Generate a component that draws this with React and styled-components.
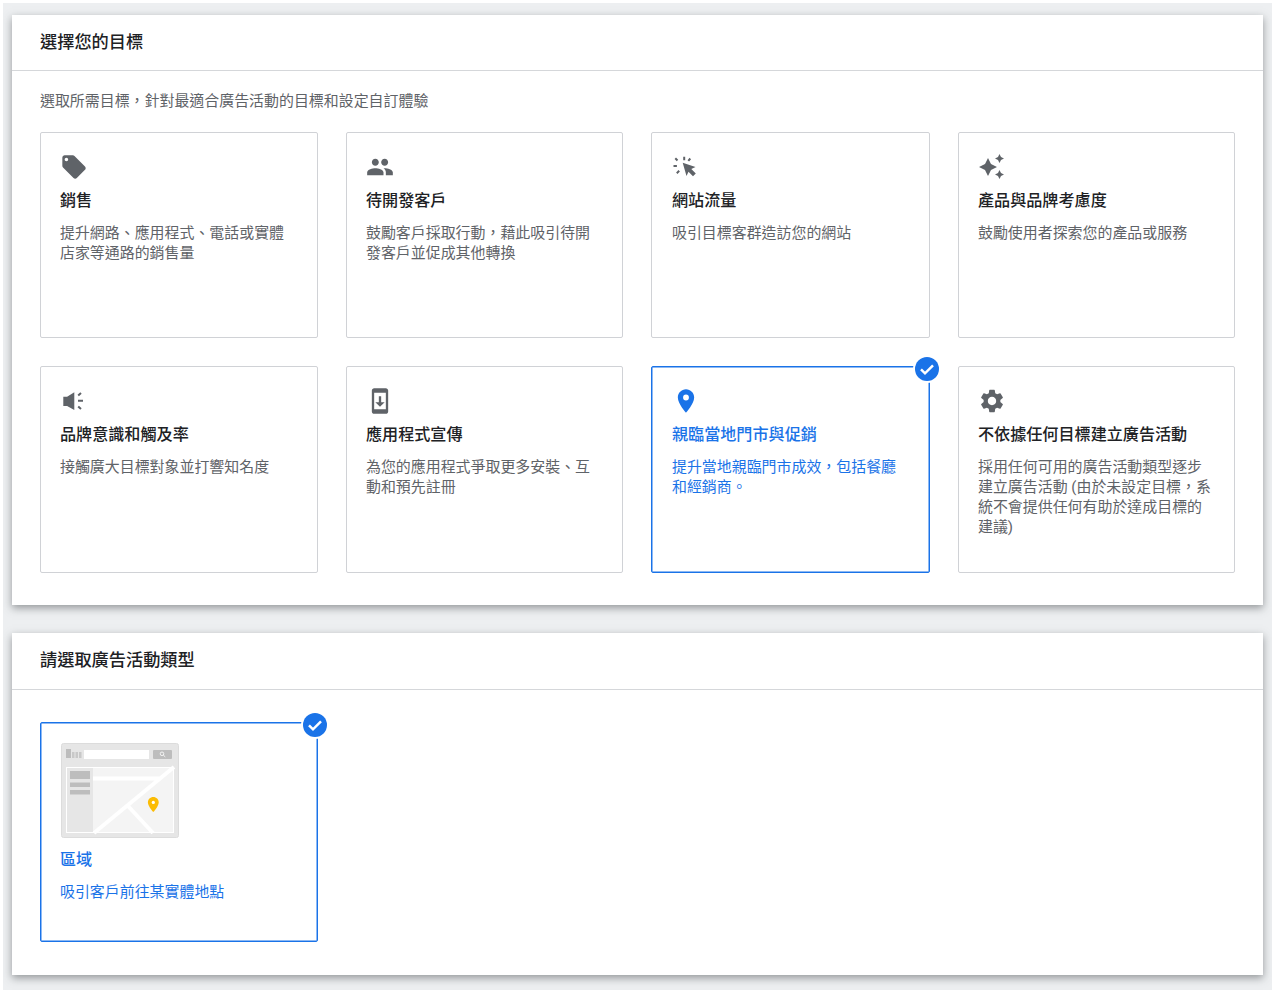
import styled, { createGlobalStyle } from 'styled-components';
import { MdLocalOffer, MdPeople, MdSystemUpdate, MdPlace, MdSettings } from 'react-icons/md';

const GlobalStyle = createGlobalStyle`
  html, body {
    margin: 0;
    padding: 0;
    background: #fff;
  }
  * {
    box-sizing: border-box;
  }
`;

const Page = styled.div`
  font-family: Roboto, 'Noto Sans CJK TC', sans-serif;
  margin: 3px 0 0 3px;
  padding: 12px 9px 0;
  height: 987px;
  overflow: hidden;
  background: #edeff1;
  display: flex;
  flex-direction: column;
  gap: 28px;
`;

const Panel = styled.section`
  background: #fff;
  box-shadow: 0 3px 8px rgba(60, 64, 67, 0.5);
`;

const PanelHeader = styled.h2`
  margin: 0;
  height: ${(p) => p.$height || 56}px;
  padding: 0 28px 4px;
  display: flex;
  align-items: center;
  font-size: 17.2px;
  font-weight: 500;
  color: #202124;
  border-bottom: 1px solid #d5d7da;
`;

const PanelBody = styled.div`
  padding: ${(p) => p.$top || 20}px 28px ${(p) => p.$bottom || 32}px;
`;

const Hint = styled.p`
  margin: 0 0 21px;
  font-size: 14.95px;
  line-height: 20px;
  color: #5f6368;
`;

const CardGrid = styled.div`
  display: grid;
  grid-template-columns: 278px 277px 279px 277px;
  grid-template-rows: ${(p) => p.$rows};
  gap: 28px;
`;

const Card = styled.div`
  position: relative;
  padding: 20px 19px;
  border: 1px solid ${(p) => (p.$selected ? '#1a73e8' : '#d0d2d6')};
  border-radius: 2px;
  color: ${(p) => (p.$selected ? '#1a73e8' : '#5f6368')};
  box-shadow: ${(p) => (p.$selected ? 'inset 0 0 0 0.5px #1a73e8' : 'none')};

  &:nth-child(4n + 3) {
    padding-left: 20px;
  }
`;

const IconSlot = styled.div`
  width: 28px;
  height: 28px;

  svg {
    display: block;
    width: 28px;
    height: 28px;
    fill: currentColor;
  }
`;

const PreviewSlot = styled.div`
  height: 97px;
  padding-left: 1px;

  svg {
    display: block;
  }
`;

const CardTitle = styled.h3`
  margin: 10px 0 12px;
  font-size: 16.1px;
  line-height: 20px;
  font-weight: 500;
  color: ${(p) => (p.$selected ? '#1a73e8' : '#202124')};
`;

const CardText = styled.p`
  margin: 0;
  font-size: 14.95px;
  line-height: 20px;
  color: inherit;
`;

const CheckBadge = styled.div`
  position: absolute;
  top: -10px;
  right: -10px;
  width: 24px;
  height: 24px;
  border-radius: 50%;
  background: #1a73e8;
  box-shadow: 0 0 0 2px #fff;
  display: flex;
  align-items: center;
  justify-content: center;
`;

const CheckMark = () => (
  <svg width="24" height="24" viewBox="0 0 24 24">
    <path d="M6 12.300l4 4 8-8" fill="none" stroke="#fff" strokeWidth="2.500" />
  </svg>
);

const SparkleIcon = () => (
  <svg viewBox="0 0 28 28">
    <path d="M10 5l3 6 6 3-6 3-3 6-3-6-6-3 6-3z" />
    <path d="M21.500 1l1.500 3 3 1.500-3 1.500-1.500 3-1.500-3-3-1.500 3-1.500z" />
    <path d="M21.500 17l1.500 3 3 1.500-3 1.500-1.500 3-1.500-3-3-1.500 3-1.500z" />
  </svg>
);

const ClickIcon = () => (
  <svg viewBox="0 0 28 28">
    <path d="M10.700 9.700L23.500 14l-4.200 2 4.500 4.500-2.800 2.800-4.500-4.500-2 4.200z" />
    <path
      d="M12.200 3.800v3.400M18.300 5.500l-2 2.400M3.300 5.300l2.200 2.200M1.500 13h3.400M4.800 20.200l2.400-2.400"
      fill="none"
      stroke="currentColor"
      strokeWidth="2"
    />
  </svg>
);

const MegaphoneIcon = () => (
  <svg viewBox="0 0 28 28">
    <path d="M3.300 9.700h3.800l7.200-4.400v17.700L7.100 19H3.300z" />
    <path
      d="M21 6l-2.800 2.600M18 13.800h5M18.200 19.400l2.800 2.600"
      fill="none"
      stroke="currentColor"
      strokeWidth="2"
    />
  </svg>
);

const MapPreview = () => (
  <svg width="118" height="96" viewBox="0 0 118 96">
    <rect x="0.500" y="0.500" width="117" height="94" rx="2" fill="#e6e6e6" stroke="#dcdcdc" />
    <rect x="5" y="24" width="108" height="66" fill="#fff" />
    <rect x="6" y="25" width="106" height="64" fill="#f4f4f4" />
    <rect x="6" y="25" width="26" height="64" fill="#e6e6e6" />
    <rect x="5" y="6" width="5" height="9" fill="#bdbdbd" />
    <rect x="11" y="9" width="2.500" height="6" fill="#c8c8c8" />
    <rect x="14.500" y="9" width="2.500" height="6" fill="#c8c8c8" />
    <rect x="18" y="9" width="2.500" height="6" fill="#c8c8c8" />
    <rect x="23" y="7" width="65" height="9" fill="#fff" />
    <rect x="92" y="7" width="19" height="9" rx="1" fill="#bdbdbd" />
    <circle cx="101" cy="10.800" r="1.800" fill="none" stroke="#fff" strokeWidth="0.800" />
    <path d="M102.300 12.100l2 1.800" stroke="#fff" strokeWidth="0.800" />
    <rect x="9" y="28" width="20" height="8" fill="#bdbdbd" />
    <rect x="9" y="39.500" width="20" height="4.500" fill="#bdbdbd" />
    <rect x="9" y="47" width="20" height="4.500" fill="#bdbdbd" />
    <path
      d="M32 35.500h66M113 24L33 90M67 63l25 27"
      fill="none"
      stroke="#fff"
      strokeWidth="4"
    />
    <path
      d="M92.300 54c-3 0-5.400 2.400-5.400 5.400 0 3.800 5.400 9.600 5.400 9.600s5.400-5.800 5.400-9.600c0-3-2.400-5.400-5.400-5.400z"
      fill="#fbbc04"
    />
    <circle cx="92.300" cy="59.400" r="1.600" fill="#fff" />
  </svg>
);

const goals = [
  {
    icon: <MdLocalOffer />,
    title: '銷售',
    text: '提升網路、應用程式、電話或實體店家等通路的銷售量',
  },
  {
    icon: <MdPeople />,
    title: '待開發客戶',
    text: '鼓勵客戶採取行動\uFF0C藉此吸引待開發客戶並促成其他轉換',
  },
  {
    icon: <ClickIcon />,
    title: '網站流量',
    text: '吸引目標客群造訪您的網站',
  },
  {
    icon: <SparkleIcon />,
    title: '產品與品牌考慮度',
    text: '鼓勵使用者探索您的產品或服務',
  },
  {
    icon: <MegaphoneIcon />,
    title: '品牌意識和觸及率',
    text: '接觸廣大目標對象並打響知名度',
  },
  {
    icon: <MdSystemUpdate />,
    title: '應用程式宣傳',
    text: '為您的應用程式爭取更多安裝、互動和預先註冊',
  },
  {
    icon: <MdPlace />,
    title: '親臨當地門市與促銷',
    text: '提升當地親臨門市成效\uFF0C包括餐廳和經銷商。',
    selected: true,
  },
  {
    icon: <MdSettings />,
    title: '不依據任何目標建立廣告活動',
    text: '採用任何可用的廣告活動類型逐步建立廣告活動 (由於未設定目標\uFF0C系統不會提供任何有助於達成目標的建議)',
  },
];

function GoalCard({ icon, title, text, selected }) {
  return (
    <Card $selected={selected}>
      {selected && (
        <CheckBadge>
          <CheckMark />
        </CheckBadge>
      )}
      {icon}
      <CardTitle $selected={selected}>{title}</CardTitle>
      <CardText>{text}</CardText>
    </Card>
  );
}

export default function App() {
  return (
    <>
      <GlobalStyle />
      <Page>
        <Panel>
          <PanelHeader>選擇您的目標</PanelHeader>
          <PanelBody>
            <Hint>{'選取所需目標\uFF0C針對最適合廣告活動的目標和設定自訂體驗'}</Hint>
            <CardGrid $rows="206px 207px">
              {goals.map((goal) => (
                <GoalCard
                  key={goal.title}
                  {...goal}
                  icon={<IconSlot>{goal.icon}</IconSlot>}
                />
              ))}
            </CardGrid>
          </PanelBody>
        </Panel>

        <Panel>
          <PanelHeader $height={56.500}>請選取廣告活動類型</PanelHeader>
          <PanelBody $top={32.500} $bottom={33}>
            <CardGrid $rows="220px">
              <GoalCard
                selected
                icon={
                  <PreviewSlot>
                    <MapPreview />
                  </PreviewSlot>
                }
                title="區域"
                text="吸引客戶前往某實體地點"
              />
            </CardGrid>
          </PanelBody>
        </Panel>
      </Page>
    </>
  );
}
